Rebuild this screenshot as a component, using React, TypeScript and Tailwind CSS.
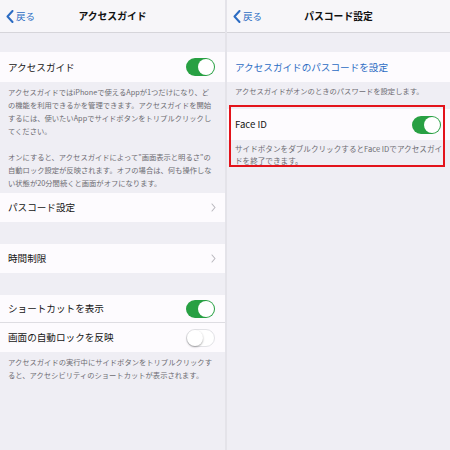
import React from "react";

const font = { fontFamily: '"Noto Sans CJK JP", "Noto Sans", sans-serif' };

function Back() {
  return (
    <div className="flex items-center gap-[2px] pl-[6px] text-[#2c6cc3] text-[9.5px]">
      <svg width="8" height="13" viewBox="0 0 8 13" fill="none">
        <polyline points="6.5,1 1.5,6.5 6.5,12" stroke="#2c6cc3" strokeWidth="2" strokeLinecap="round" strokeLinejoin="round" />
      </svg>
      <span>戻る</span>
    </div>
  );
}

function Nav({ title }: { title: string }) {
  return (
    <div className="h-[33px] shrink-0 grid grid-cols-[1fr_auto_1fr] items-center bg-[#f7f6f9] border-b border-[#d6d5da]">
      <Back />
      <div className="text-[9.8px] font-bold text-[#111]">{title}</div>
      <div />
    </div>
  );
}

function Toggle({ on }: { on: boolean }) {
  return on ? (
    <div className="w-[29px] h-[18px] rounded-full bg-[#28a043] flex items-center justify-end pr-[1px]">
      <div className="w-[16px] h-[16px] rounded-full bg-white" />
    </div>
  ) : (
    <div className="w-[29px] h-[18px] rounded-full bg-white border border-[#e2e2e6] flex items-center justify-start">
      <div className="w-[16px] h-[16px] rounded-full bg-white shadow-[0_1px_2px_rgba(0,0,0,0.35)]" />
    </div>
  );
}

function Chevron() {
  return (
    <svg width="5" height="9" viewBox="0 0 5 9" fill="none">
      <polyline points="1,1 4,4.5 1,8" stroke="#b9b8be" strokeWidth="1.1" strokeLinecap="round" strokeLinejoin="round" />
    </svg>
  );
}

function Row({ label, right, h = "h-[30px]", blue = false, pr = "pr-[10px]" }: { label: string; right?: React.ReactNode; h?: string; blue?: boolean; pr?: string }) {
  return (
    <div className={`${h} flex items-center justify-between pl-[8px] ${pr} bg-[#fdfbfe]`}>
      <span className={`text-[9.6px] ${blue ? "text-[#2c6cc3]" : "text-[#151515]"}`}>{label}</span>
      {right}
    </div>
  );
}

export default function App() {
  return (
    <div className="w-[450px] h-[450px] flex bg-[#efeef4] overflow-hidden" style={font}>
      {/* Left pane */}
      <div className="w-[225px] flex flex-col">
        <Nav title="アクセスガイド" />
        <div className="h-[19px]" />
        <Row label="アクセスガイド" right={<Toggle on />} />
        <div className="pl-[8px] pr-[4px] pt-[4px] pb-[3px] text-[7.3px] leading-[13px] text-[#6d6c72] whitespace-nowrap">
          <div>アクセスガイドではiPhoneで使えるAppが1つだけになり、ど</div>
          <div>の機能を利用できるかを管理できます。アクセスガイドを開始</div>
          <div>するには、使いたいAppでサイドボタンをトリプルクリックし</div>
          <div>てください。</div>
          <div>&nbsp;</div>
          <div>オンにすると、アクセスガイドによって"画面表示と明るさ"の</div>
          <div>自動ロック設定が反映されます。オフの場合は、何も操作しな</div>
          <div>い状態が20分間続くと画面がオフになります。</div>
        </div>
        <Row label="パスコード設定" h="h-[29px]" right={<Chevron />} pr="pr-[9px]" />
        <div className="h-[22px]" />
        <Row label="時間制限" h="h-[29px]" right={<Chevron />} pr="pr-[9px]" />
        <div className="h-[22px]" />
        <div className="bg-[#fdfbfe]">
          <div className="h-[28px] flex items-center justify-between pl-[8px] pr-[10px] border-b border-[#dedde2]">
            <span className="text-[9.6px] text-[#151515]">ショートカットを表示</span>
            <Toggle on />
          </div>
          <Row label="画面の自動ロックを反映" h="h-[29px]" right={<Toggle on={false} />} />
        </div>
        <div className="pl-[8px] pt-[4px] text-[7.3px] leading-[12.5px] text-[#6d6c72] whitespace-nowrap">
          <div>アクセスガイドの実行中にサイドボタンをトリプルクリックす</div>
          <div>ると、アクセシビリティのショートカットが表示されます。</div>
        </div>
      </div>

      {/* divider */}
      <div className="w-[2px] bg-[#e4e3e9]" />

      {/* Right pane */}
      <div className="flex-1 relative flex flex-col">
        <Nav title="パスコード設定" />
        <div className="h-[19px]" />
        <Row label="アクセスガイドのパスコードを設定" blue />
        <div className="pl-[8px] pt-[3px] pb-[11px] text-[7.3px] leading-[13px] text-[#6d6c72] whitespace-nowrap">
          アクセスガイドがオンのときのパスワードを設定します。
        </div>
        <Row label="Face ID" h="h-[31px]" right={<Toggle on />} pr="pr-[9px]" />
        <div className="pl-[8px] pt-[3px] text-[7.6px] leading-[12px] text-[#6d6c72] whitespace-nowrap">
          <div>サイドボタンをダブルクリックするとFace IDでアクセスガイ</div>
          <div>ドを終了できます。</div>
        </div>
        <div className="absolute top-[105px] left-[2px] right-[5px] h-[62px] border-2 border-[#e3131b]" />
      </div>
    </div>
  );
}
